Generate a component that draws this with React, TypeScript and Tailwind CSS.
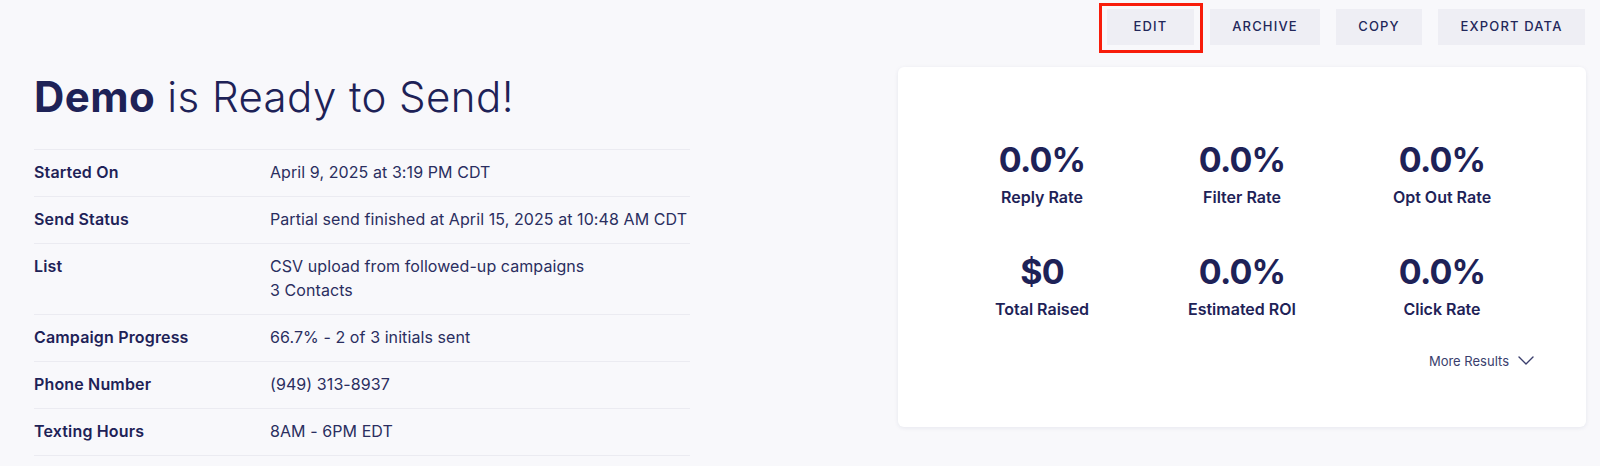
const details = [
  { label: 'Started On', value: ['April 9, 2025 at 3:19 PM CDT'] },
  { label: 'Send Status', value: ['Partial send finished at April 15, 2025 at 10:48 AM CDT'] },
  { label: 'List', value: ['CSV upload from followed-up campaigns', '3 Contacts'] },
  { label: 'Campaign Progress', value: ['66.7% - 2 of 3 initials sent'] },
  { label: 'Phone Number', value: ['(949) 313-8937'] },
  { label: 'Texting Hours', value: ['8AM - 6PM EDT'] },
]

const stats = [
  { value: '0.0%', label: 'Reply Rate' },
  { value: '0.0%', label: 'Filter Rate' },
  { value: '0.0%', label: 'Opt Out Rate' },
  { value: '$0', label: 'Total Raised' },
  { value: '0.0%', label: 'Estimated ROI' },
  { value: '0.0%', label: 'Click Rate' },
]

const ActionButton = ({ label, width }: { label: string; width: string }) => (
  <button className={`h-9 ${width} bg-[#eeeef4] text-[13px] font-medium tracking-[0.09em] text-[#23275a]`}>
    {label}
  </button>
)

const App = () => {
  return (
    <div className="min-h-screen bg-[#f8f8fb] font-['Inter',sans-serif] text-[#1e2257]">
      <div className="flex justify-end gap-4 pt-[9px] pr-[15px]">
        <div className="relative">
          <ActionButton label="EDIT" width="w-[87px]" />
          <span className="pointer-events-none absolute -left-[8px] -right-[9px] -top-[6px] -bottom-[8px] border-[3px] border-[#f81d0b]" />
        </div>
        <ActionButton label="ARCHIVE" width="w-[110px]" />
        <ActionButton label="COPY" width="w-[86px]" />
        <ActionButton label="EXPORT DATA" width="w-[147px]" />
      </div>

      <div className="flex justify-between pl-[34px] pr-[14px] pt-[22px]">
        <div className="w-[656px]">
          <h1 className="mt-[5px] text-[42px] leading-[50px] font-light tracking-[0.01em] text-[#1e2257]">
            <span className="font-bold">Demo</span> is Ready to Send!
          </h1>

          <div className="mt-[27px] border-t border-[#ebebf1]">
            {details.map((row) => (
              <div key={row.label} className="flex border-b border-[#ebebf1] pt-[10px] pb-[12px] text-[16px] leading-6">
                <div className="w-[236px] font-semibold tracking-[0.01em]">{row.label}</div>
                <div className="flex flex-col tracking-[0.005em] text-[#2a2e60]">
                  {row.value.map((line) => (
                    <span key={line}>{line}</span>
                  ))}
                </div>
              </div>
            ))}
          </div>
        </div>

        <div className="w-[688px] h-[360px] bg-white rounded-md shadow-[0_1px_4px_rgba(30,34,87,0.08)]">
          <div className="mx-auto mt-[76px] grid w-[600px] grid-cols-3 gap-y-[46px]">
            {stats.map((s) => (
              <div key={s.label} className="flex flex-col items-center">
                <span className="text-[34px] leading-[34px] font-bold tracking-tight">{s.value}</span>
                <span className="mt-2 text-[16px] leading-6 font-semibold">{s.label}</span>
              </div>
            ))}
          </div>
          <div className="mt-[30px] flex justify-end pr-[52px]">
            <button className="flex items-center gap-[9px] text-[13px] leading-5 text-[#3a3e6d]">
              More Results
              <svg width="16" height="9" viewBox="0 0 16 9" fill="none" className="mb-[2px]">
                <path d="M1 1l7 7 7-7" stroke="#3a3e6d" strokeWidth="1.4" strokeLinecap="round" strokeLinejoin="round" />
              </svg>
            </button>
          </div>
        </div>
      </div>
    </div>
  )
}

export default App
